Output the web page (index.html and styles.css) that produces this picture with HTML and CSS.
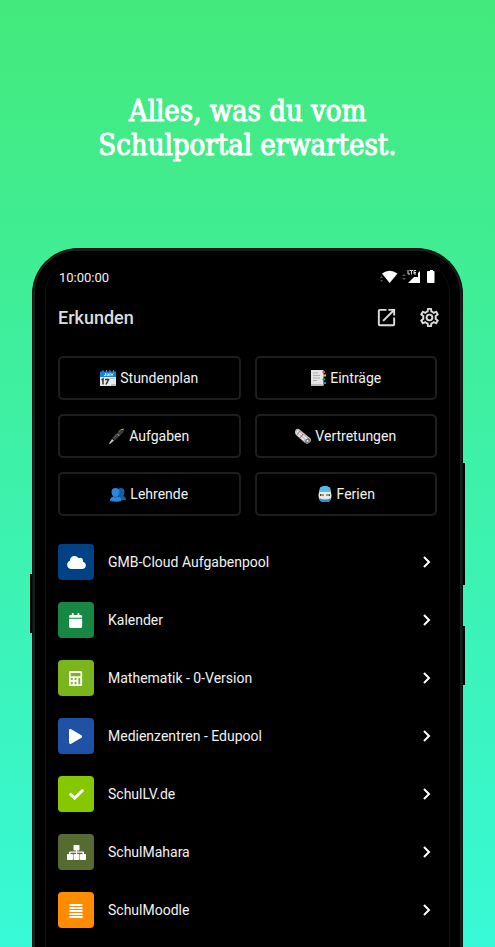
FILE: index.html
```html
<!DOCTYPE html>
<html lang="de">
<head>
<meta charset="utf-8">
<meta name="viewport" content="width=device-width, initial-scale=1">
<title>Schulportal</title>
<link rel="stylesheet" href="styles.css">
</head>
<body>
<h1 class="headline">Alles, was du vom<br>Schulportal erwartest.</h1>
<main class="phone">
  <span class="side-key key-left"></span>
  <span class="side-key key-volume"></span>
  <span class="side-key key-power"></span>
  <div class="frame">
  <div class="screen">
    <div class="status">
      <span>10:00:00</span>
      <svg class="status-icons" viewBox="0 0 56 16" aria-hidden="true">
        <path fill="#fff" d="M2 4.500Q9.500-.8 17.500 4.500L9.700 14Z"/>
        <path fill="#555" d="m0 9 1.500-2L3 9ZM0 11l1.500 2L3 11ZM22 7l2-2 2 2ZM22 9l2 2 2-2Z"/>
        <path fill="#fff" d="M40 2v12H28l6-6h4V4Z"/>
        <path fill="none" stroke="#ddd" d="M28 1v4h2M29.500 1.500H33M31.500 1.500V5.500M36 1.500h-2v3.500h2M34 3.500h2"/>
        <path fill="#fff" d="M48 2h2V1h3v1h1q.5 0 .5.500V13q0 1-.5 1h-6q-1 0-1-1V3q0-1 1-1Z"/>
      </svg>
    </div>
    <header class="bar">
      <h2>Erkunden</h2>
      <button class="icon-button" aria-label="Extern öffnen"><svg viewBox="0 0 24 24"><path fill="#ddd" d="M19 19H5V5h7V3H5a2 2 0 0 0-2 2v14a2 2 0 0 0 2 2h14a2 2 0 0 0 2-2v-7h-2v7zM14 3v2h3.590l-9.830 9.830 1.410 1.410L19 6.410V10h2V3h-7z"/></svg></button>
      <button class="icon-button" aria-label="Einstellungen"><svg viewBox="0 0 24 24"><path fill="#ddd" d="M19.430 12.980c.04-.32.070-.64.070-.98s-.03-.66-.07-.98l2.110-1.650c.19-.15.240-.42.120-.64l-2-3.460c-.09-.16-.26-.25-.44-.25-.06 0-.12.010-.17.030l-2.490 1c-.52-.4-1.080-.73-1.690-.98l-.38-2.650A.488.488 0 0 0 14 2h-4c-.25 0-.46.180-.49.420l-.38 2.650c-.61.250-1.170.590-1.690.980l-2.490-1a.57.570 0 0 0-.18-.03c-.17 0-.34.090-.43.250l-2 3.460c-.13.220-.07.490.120.640l2.110 1.650c-.04.320-.07.650-.07.980s.03.660.070.980l-2.110 1.650c-.19.150-.24.420-.12.640l2 3.460c.09.160.260.250.440.250.060 0 .12-.01.170-.03l2.490-1c.52.400 1.080.730 1.690.980l.38 2.650c.03.240.240.420.490.420h4c.25 0 .46-.18.490-.42l.38-2.650c.61-.25 1.170-.59 1.690-.98l2.490 1c.06.020.120.030.180.030.170 0 .34-.09.430-.25l2-3.460c.12-.22.070-.49-.12-.64l-2.110-1.650zm-1.980-1.710c.04.310.050.520.050.730s-.02.430-.05.730l-.14 1.130.89.700 1.080.840-.7 1.210-1.270-.51-1.040-.42-.9.680c-.43.320-.84.560-1.250.730l-1.060.430-.16 1.130-.2 1.350h-1.400l-.19-1.350-.16-1.130-1.060-.43c-.43-.18-.83-.41-1.230-.71l-.91-.7-1.060.430-1.270.510-.7-1.210 1.080-.84.890-.7-.14-1.130c-.03-.31-.05-.54-.05-.74s.02-.43.050-.73l.14-1.130-.89-.7-1.080-.84.700-1.210 1.270.510 1.040.420.900-.68c.43-.32.840-.56 1.250-.73l1.060-.43.160-1.130.2-1.350h1.390l.19 1.350.16 1.130 1.060.430c.43.180.830.410 1.230.710l.91.700 1.060-.43 1.270-.51.700 1.210-1.070.850-.89.700.14 1.130zM12 8a4 4 0 1 0 0 8 4 4 0 0 0 0-8zm0 6a2 2 0 1 1 0-4 2 2 0 0 1 0 4z"/></svg></button>
    </header>
    <nav class="tiles">
      <button class="tile"><svg viewBox="0 0 16 16"><path fill="#e9eaec" d="M0 2h16v14H0z"/><path fill="#1685d9" d="M0 1.500h16V7H0z"/><path stroke="#888" d="M3 0v2M6.500 0v2M10 0v2M13.500 0v2"/><path fill="none" stroke="#d5efff" stroke-width=".9" d="M5.500 3v2.500H4M7 3.500v2h1.500v-2M10 3v3M11 3.500l1 2 1-2"/><path fill="none" stroke="#333" stroke-width="1.500" d="m1.500 10 1.500-1v5.500M5 9.500h3.500L6 14.500"/><path fill="#bfc1c4" d="M10 8h5v1h-5zM11 14h5v2h-5z"/></svg>Stundenplan</button>
      <button class="tile"><svg viewBox="0 0 16 16"><path fill="#e4e4e4" d="M1 0h12.500v15q0 1-1 1H2q-1 0-1-1Z"/><path fill="#bbb" d="M1 14h12.500v1q0 1-1 1H2q-1 0-1-1z"/><path stroke="#999" stroke-width=".7" d="M3 3h5M3 5.500h7M3 8h7M3 10.500h4"/><path fill="#e84232" d="M12.500 1H15v2h-2.500z"/><path fill="#f4bf2a" d="M13 4.500h3v2h-3z"/><path fill="#18a05e" d="M12.500 8.500H15v2h-2.500z"/><path fill="#3679ee" d="M13 12h3v2h-3z"/></svg>Einträge</button>
      <button class="tile"><svg viewBox="0 0 16 16"><path fill="#3b3b3d" d="M3 10 11 2q2-2 4-1.500.8 1.500-1 4L6 12.500Z"/><path fill="#c7c7c7" d="m3 11 2 1.500L1 16l-1-.5Z"/><path stroke="#d59b43" stroke-width="1" d="m8.500 6 2 2M10 3.500l2-2h2.500"/><path stroke="#777" stroke-width=".7" d="m5 10 4-4"/></svg>Aufgaben</button>
      <button class="tile"><svg viewBox="0 0 16 16"><path fill="#bdbdbd" d="M0 3q1-3 4-2l11 9q2 2 0 4-2 3-5 1L1 7Q-.5 5 0 3Z"/><path stroke="#eee" stroke-width="1.200" d="m2 3 10 8M1 5l8 7"/><path stroke="#696969" stroke-width=".7" d="m5 3-3 4M8 6l-3 4"/><path stroke="#c45b48" stroke-width=".8" d="m8 6-2 3"/><ellipse cx="12.500" cy="13" rx="3" ry="2" fill="#737373" transform="rotate(-45 12.500 13)"/><circle cx="12.500" cy="13" r="1" fill="#eee"/></svg>Vertretungen</button>
      <button class="tile"><svg viewBox="0 0 16 16"><path fill="#155ea2" d="M8 6q-.5-4 3-4t3.500 4q0 3-1.500 4 3 .5 3 4H9Z"/><path fill="#2687dc" d="M1.500 6q0-4 4-4t4 4q0 3-2 4.500 4 .5 4 4.500-5 1.500-11.500 0 0-4 3.500-4.500Q1.500 9 1.500 6Z"/><path fill="#1768b2" d="M4 10q1.500 1.500 3 0v1.500H4Z"/></svg>Lehrende</button>
      <button class="tile"><svg viewBox="0 0 16 16"><path fill="#e6e9ed" d="M3 2q5-4 10 0l1.500 7q0 5-2.500 6H4q-2.500-1-2.500-6Z"/><path fill="#4dbcf2" d="M3 1.500q5-3 10 0L13.500 6h-11Z"/><path fill="#3b4852" d="M3 8h10v2H3z"/><path fill="#f3ead0" d="M6.500 8h3v3h-3z"/><circle cx="5" cy="9" r=".9" fill="#edc457"/><circle cx="11" cy="9" r=".9" fill="#edc457"/><path fill="#288bd0" d="M2 12q6 3 12 0l-2 4H4Z"/></svg>Ferien</button>
    </nav>
    <ul class="links">
      <li><a href="#"><span class="badge cloud"><svg viewBox="0 0 640 512" class="wide"><path d="M537.600 226.600c4.100-10.700 6.400-22.400 6.400-34.600 0-53-43-96-96-96-19.700 0-38.100 6-53.300 16.200C367 64.200 315.300 32 256 32c-88.400 0-160 71.600-160 160 0 2.700.1 5.400.2 8.100C40.200 219.800 0 273.200 0 336c0 79.500 64.500 144 144 144h368c70.700 0 128-57.300 128-128 0-61.900-44-113.600-102.400-125.400z"/></svg></span><span class="label">GMB-Cloud Aufgabenpool</span><svg class="chevron" viewBox="0 0 12 14"><path d="m3 2 5 5-5 5"/></svg></a></li>
      <li><a href="#"><span class="badge calendar"><svg viewBox="0 0 448 512"><path d="M12 192h424c6.600 0 12 5.400 12 12v260c0 26.500-21.500 48-48 48H48c-26.500 0-48-21.500-48-48V204c0-6.600 5.400-12 12-12zm436-44v-36c0-26.500-21.500-48-48-48h-48V12c0-6.600-5.400-12-12-12h-40c-6.600 0-12 5.400-12 12v52H160V12c0-6.600-5.400-12-12-12h-40c-6.600 0-12 5.400-12 12v52H48C21.500 64 0 85.500 0 112v36c0 6.600 5.400 12 12 12h424c6.600 0 12-5.400 12-12z"/></svg></span><span class="label">Kalender</span><svg class="chevron" viewBox="0 0 12 14"><path d="m3 2 5 5-5 5"/></svg></a></li>
      <li><a href="#"><span class="badge calculator"><svg viewBox="0 0 448 512"><path fill-rule="evenodd" d="M40 0h368q40 0 40 40v432q0 40-40 40H40q-40 0-40-40V40Q0 0 40 0ZM56 64v112h336V64ZM64 240v70h64v-70Zm128 0v70h64v-70Zm128 0v70h64v-70ZM64 378v70h64v-70Zm128 0v70h64v-70Zm128-68v138h64v-138Z"/></svg></span><span class="label">Mathematik - 0-Version</span><svg class="chevron" viewBox="0 0 12 14"><path d="m3 2 5 5-5 5"/></svg></a></li>
      <li><a href="#"><span class="badge play"><svg viewBox="0 0 448 512"><path d="M424.400 214.700 72.400 6.600C43.800-10.300 0 6.100 0 47.900V464c0 37.500 40.700 60.100 72.400 41.300l352-208c31.400-18.500 31.500-64.100 0-82.600z"/></svg></span><span class="label">Medienzentren - Edupool</span><svg class="chevron" viewBox="0 0 12 14"><path d="m3 2 5 5-5 5"/></svg></a></li>
      <li><a href="#"><span class="badge check"><svg viewBox="0 0 512 512"><path d="m173.900 439.400-166.400-166.400c-10-10-10-26.200 0-36.200l36.200-36.200c10-10 26.200-10 36.200 0L192 312.700 432.100 72.600c10-10 26.200-10 36.200 0l36.200 36.200c10 10 10 26.200 0 36.200L210.100 439.400c-10 10-26.200 10-36.200 0z"/></svg></span><span class="label">SchulLV.de</span><svg class="chevron" viewBox="0 0 12 14"><path d="m3 2 5 5-5 5"/></svg></a></li>
      <li><a href="#"><span class="badge sitemap"><svg viewBox="0 0 19 15" class="wide"><rect x="6.500" y="0" width="6" height="5.500" rx=".8"/><rect x="0" y="9" width="6" height="6" rx=".8"/><rect x="6.500" y="9" width="6" height="6" rx=".8"/><rect x="13" y="9" width="6" height="6" rx=".8"/><path d="M9 5h1v1.500h6q1 0 1 1V9h-1.500V7.800H10V9H9V7.800H3.500V9H2V7.500q0-1 1-1h6Z"/></svg></span><span class="label">SchulMahara</span><svg class="chevron" viewBox="0 0 12 14"><path d="m3 2 5 5-5 5"/></svg></a></li>
      <li><a href="#"><span class="badge lines"><svg viewBox="0 0 14 15"><path d="M.5 1h13v2H.5zM.5 4h13v2H.5zM.5 7h13v2H.5zM.5 10h13v2H.5zM.5 13h13v2H.5z"/></svg></span><span class="label">SchulMoodle</span><svg class="chevron" viewBox="0 0 12 14"><path d="m3 2 5 5-5 5"/></svg></a></li>
    </ul>
  </div>
  </div>
</main>
</body>
</html>
```
FILE: styles.css
```css
* { box-sizing: border-box; }
body {
  margin: 0;
  min-height: 100vh;
  display: flex;
  flex-direction: column;
  background: linear-gradient(#43e97b, #38f9d7);
  font-family: Roboto, sans-serif;
  color: #f2f2f2;
}
.headline {
  margin: 94px 0 86px;
  text-align: center;
  font: 400 29px/34px "DejaVu Serif Condensed", "DejaVu Serif", serif;
  color: #fff;
  -webkit-text-stroke: 1px #fff;
}
.phone {
  position: relative;
  flex: 1;
  display: flex;
  margin: 0 32px;
}
.frame {
  flex: 1;
  display: flex;
  border: 1px solid #0c1512;
  border-bottom: 0;
  border-radius: 46px 46px 0 0;
  background: #000;
  box-shadow: inset 0 2px 0 #1c1c1c, inset 2px 0 0 #1c1c1c, inset -2px 0 0 #1c1c1c;
  padding: 14px 12px 0;
}
.screen {
  flex: 1;
  min-width: 0;
  padding: 0 12px 18px;
  border: solid #101010;
  border-width: 0 1px;
  border-radius: 30px 30px 0 0;
}
.side-key {
  position: absolute;
  width: 2px;
  background: #000;
}
.key-left { left: -2px; top: 326px; height: 59px; }
.key-volume { right: -2px; top: 215px; height: 122px; }
.key-power { right: -2px; top: 378px; height: 59px; }
.status {
  display: flex;
  justify-content: space-between;
  align-items: center;
  height: 28px;
  padding: 0 1px;
  font-size: 13px;
}
.status-icons { width: 56px; height: 16px; }
.bar {
  display: flex;
  align-items: center;
  gap: 20px;
  height: 52px;
}
.bar h2 {
  flex: 1;
  margin: 0;
  font-size: 18px;
  font-weight: 500;
  color: #ddd;
}
.icon-button {
  width: 23px;
  height: 23px;
  padding: 0;
  border: 0;
  background: none;
}
.icon-button:last-child { margin-right: -4px; }
.icon-button svg { display: block; width: 23px; height: 23px; }
.tiles {
  display: grid;
  grid-template-columns: 1fr 1fr;
  gap: 14px;
  margin-top: 13px;
}
.tile {
  display: flex;
  align-items: center;
  justify-content: center;
  gap: 4px;
  height: 44px;
  padding: 0;
  border: 2px solid #1e1e1e;
  border-radius: 5px;
  background: #000;
  color: #f2f2f2;
  font: 400 14px/20px Roboto, sans-serif;
}
.tile svg { width: 16px; height: 16px; }
.links {
  list-style: none;
  margin: 28px 0 0;
  padding: 0;
  display: grid;
  gap: 22px;
}
.links a {
  display: flex;
  align-items: center;
  gap: 14px;
  color: #f2f2f2;
  text-decoration: none;
  font-size: 14px;
  line-height: 20px;
}
.label { flex: 1; }
.badge {
  display: flex;
  align-items: center;
  justify-content: center;
  width: 36px;
  height: 36px;
  border-radius: 4px;
}
.badge svg { height: 15px; fill: #fff; }
.badge .wide { width: 19px; }
.cloud { background: #004285; }
.calendar { background: #178743; }
.calculator { background: #7ab51d; }
.play { background: #1f51a5; }
.check { background: #86c800; }
.sitemap { background: #556b2f; }
.lines { background: #ff8c00; }
.chevron {
  width: 12px;
  height: 14px;
  margin-right: 4px;
  fill: none;
  stroke: #fff;
  stroke-width: 2;
}
```
